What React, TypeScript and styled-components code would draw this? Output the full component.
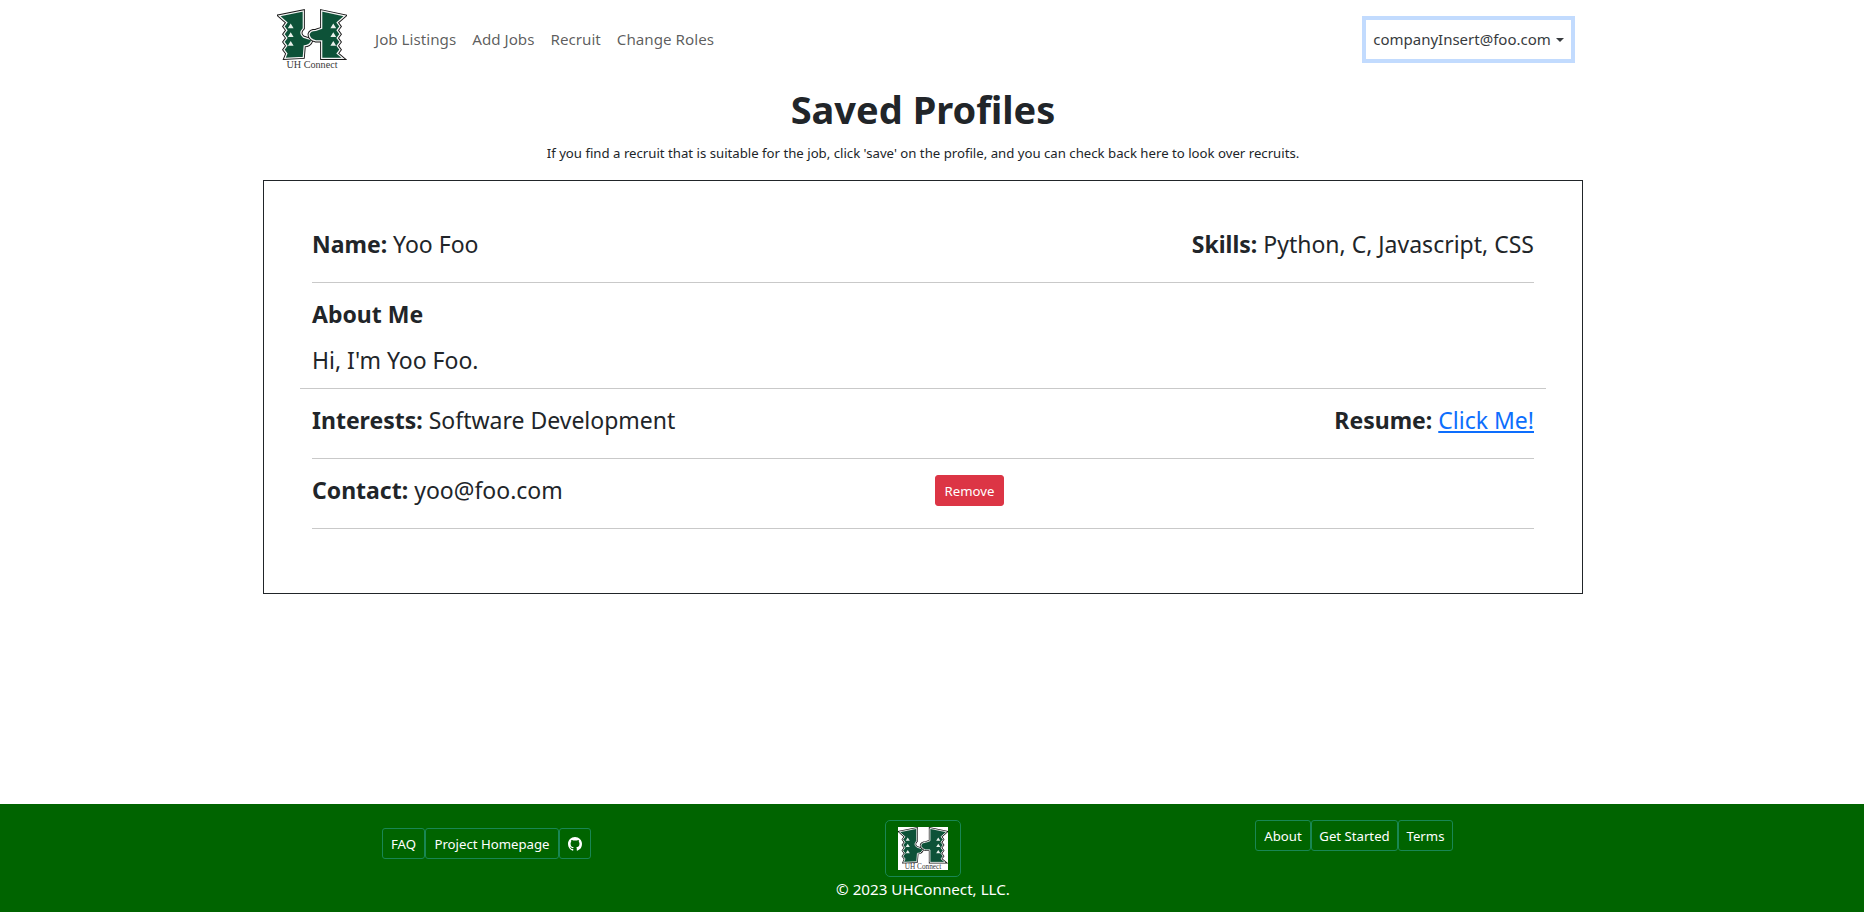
import React from "react"
import styled, { createGlobalStyle } from "styled-components"
import { BsGithub } from "react-icons/bs"

const FONT = `"Noto Sans", "Open Sans", "Liberation Sans", sans-serif`

const LEFT_HALF =
  "M2 7 L27 2 L27 20 Q22 25 27 29 L36 32 Q34 38 28 38 L27 50 L8 51 L10 46 L7 42 L10 38 L7 34 L10 30 L7 26 L10 22 L7 18 L10 14 Z"
const RIGHT_HALF =
  "M46 2 L70 7 L62 14 L65 18 L62 22 L65 26 L62 30 L65 34 L62 38 L65 42 L62 46 L68 51 L46 51 L46 33 L40 33 Q33 31 33 26 Q34 22 40 22 L46 20 Z"

const Logo = ({ width, height }: { width: number; height: number }) => (
  <svg width={width} height={height} viewBox="0 0 72 62">
    {[LEFT_HALF, RIGHT_HALF].map((d) => (
      <g key={d}>
        <path d={d} fill="none" stroke="#151515" strokeWidth="3.2" strokeLinejoin="miter" />
        <path d={d} fill="#0d5238" stroke="#f4f4f4" strokeWidth="1.3" />
      </g>
    ))}
    <path
      d="M14 15 l3 5 h-6z M14 24 l3 5 h-6z M14 33 l3 5 h-6z M58 15 l3 5 h-6z M58 24 l3 5 h-6z M58 33 l3 5 h-6z"
      fill="#e8f0ea"
    />
    <text x="36" y="60.5" textAnchor="middle" fontSize="10.5" fontFamily="Liberation Serif, serif" fill="#3a3a3a">
      UH Connect
    </text>
  </svg>
)

export default function App() {
  return (
    <>
      <GlobalStyle />
      <Page>
        <Main>
          <NavBar>
            <Brand>
              <Logo width={70} height={60} />
            </Brand>
            <NavLink>Job Listings</NavLink>
            <NavLink>Add Jobs</NavLink>
            <NavLink>Recruit</NavLink>
            <NavLink>Change Roles</NavLink>
            <UserToggle>companyInsert@foo.com</UserToggle>
          </NavBar>
          <Title>Saved Profiles</Title>
          <Subtitle>
            If you find a recruit that is suitable for the job, click 'save' on the profile, and you can check back here to look over recruits.
          </Subtitle>
          <Card>
            <Row>
              <Field><b>Name:</b> Yoo Foo</Field>
              <Field><b>Skills:</b> Python, C, Javascript, CSS</Field>
            </Row>
            <Divider />
            <AboutBlock>
              <Field><b>About Me</b></Field>
              <Field>Hi, I'm Yoo Foo.</Field>
            </AboutBlock>
            <WideDivider />
            <Row>
              <Field><b>Interests:</b> Software Development</Field>
              <Field><b>Resume:</b> <ResumeLink>Click Me!</ResumeLink></Field>
            </Row>
            <Divider />
            <Row>
              <ContactCell><Field><b>Contact:</b> yoo@foo.com</Field></ContactCell>
              <RemoveButton>Remove</RemoveButton>
            </Row>
            <Divider />
          </Card>
        </Main>
        <Footer>
          <LinkGroup $raised>
            <FooterButton $width={43}>FAQ</FooterButton>
            <FooterButton $width={134}>Project Homepage</FooterButton>
            <FooterButton $width={32}><BsGithub size={14} /></FooterButton>
          </LinkGroup>
          <FooterCenter>
            <LogoButton>
              <LogoTile><Logo width={50} height={43} /></LogoTile>
            </LogoButton>
            <Copyright>© 2023 UHConnect, LLC.</Copyright>
          </FooterCenter>
          <LinkGroup>
            <FooterButton $width={56}>About</FooterButton>
            <FooterButton $width={87}>Get Started</FooterButton>
            <FooterButton $width={55}>Terms</FooterButton>
          </LinkGroup>
        </Footer>
      </Page>
    </>
  )
}

const GlobalStyle = createGlobalStyle`
  html, body {
    margin: 0;
    background: #fff;
    color: #212529;
    font-family: ${FONT};
  }
`

const Page = styled.div`
  min-height: 912px;
  display: flex;
  flex-direction: column;
`

const Main = styled.main`
  width: 1846px;
  display: flex;
  flex-direction: column;
  align-items: center;
`

const NavBar = styled.nav`
  width: 1320px;
  height: 78px;
  padding: 0 8px 0 14px;
  box-sizing: border-box;
  display: flex;
  align-items: center;
  gap: 16px;
`

const Brand = styled.a`
  display: flex;
  margin-right: 12px;
`

const NavLink = styled.a`
  font-size: 15.2px;
  color: rgba(0, 0, 0, 0.65);
`

const UserToggle = styled.button`
  margin-left: auto;
  height: 47px;
  width: 213px;
  padding: 0;
  box-sizing: border-box;
  background: #fff;
  border: 4px solid #c2dbfe;
  font: 15px ${FONT};
  color: #373b3e;
  &::after {
    content: "";
    display: inline-block;
    margin-left: 5px;
    vertical-align: 3px;
    border-top: 4.8px solid;
    border-left: 4.8px solid transparent;
    border-right: 4.8px solid transparent;
  }
`

const Title = styled.h1`
  margin: 7px 0 0;
  font-size: 38px;
  line-height: 48px;
  font-weight: 700;
  text-align: center;
`

const Subtitle = styled.p`
  margin: 10px 0 0;
  font-size: 13.2px;
  line-height: 20px;
  text-align: center;
`

const Card = styled.section`
  width: 1320px;
  height: 414px;
  margin-top: 17px;
  padding: 32px 48px 0;
  box-sizing: border-box;
  border: 1px solid #212529;
`

const Row = styled.div`
  height: 69px;
  padding-bottom: 7px;
  box-sizing: border-box;
  display: flex;
  align-items: center;
  justify-content: space-between;
`

const Field = styled.div`
  font-size: 23px;
  line-height: 36px;
  b {
    font-weight: 700;
  }
`

const Divider = styled.hr`
  margin: 0;
  border: 0;
  border-top: 1px solid #c9c9c9;
`

const WideDivider = styled(Divider)`
  margin: 0 -12px;
`

const AboutBlock = styled.div`
  height: 105px;
  padding-top: 13px;
  box-sizing: border-box;
  display: flex;
  flex-direction: column;
  gap: 10px;
`

const ResumeLink = styled.a`
  color: #0d6efd;
  text-decoration: underline;
`

const ContactCell = styled.div`
  width: 623px;
`

const RemoveButton = styled.button`
  margin: 1px auto 0 0;
  height: 31px;
  padding: 0 8.5px;
  background: #dc3545;
  border: 1px solid #dc3545;
  border-radius: 3px;
  color: #fff;
  font: 13.2px ${FONT};
`

const Footer = styled.footer`
  margin-top: auto;
  height: 108px;
  padding: 16px 0 0 382px;
  box-sizing: border-box;
  background: #006400;
  display: flex;
  align-items: flex-start;
  gap: 294px;
`

const LinkGroup = styled.div<{ $raised?: boolean }>`
  display: flex;
  margin-top: ${(p) => (p.$raised ? "8px" : "0")};
`

const FooterButton = styled.button<{ $width: number }>`
  width: ${(p) => p.$width}px;
  height: 31px;
  padding: 0;
  display: flex;
  align-items: center;
  justify-content: center;
  white-space: nowrap;
  background: transparent;
  border: 1px solid #198754;
  border-radius: 3px;
  color: #fff;
  font: 13.2px ${FONT};
`

const FooterCenter = styled.div`
  width: 76px;
  display: flex;
  flex-direction: column;
  align-items: center;
`

const LogoButton = styled.a`
  width: 76px;
  height: 57px;
  box-sizing: border-box;
  border: 1px solid #198754;
  border-radius: 5px;
  display: flex;
  align-items: center;
  justify-content: center;
`

const LogoTile = styled.div`
  width: 50px;
  height: 43px;
  background: #fff;
  display: flex;
`

const Copyright = styled.div`
  margin-top: 0;
  font-size: 15.2px;
  line-height: 24px;
  color: #fff;
  white-space: nowrap;
`
